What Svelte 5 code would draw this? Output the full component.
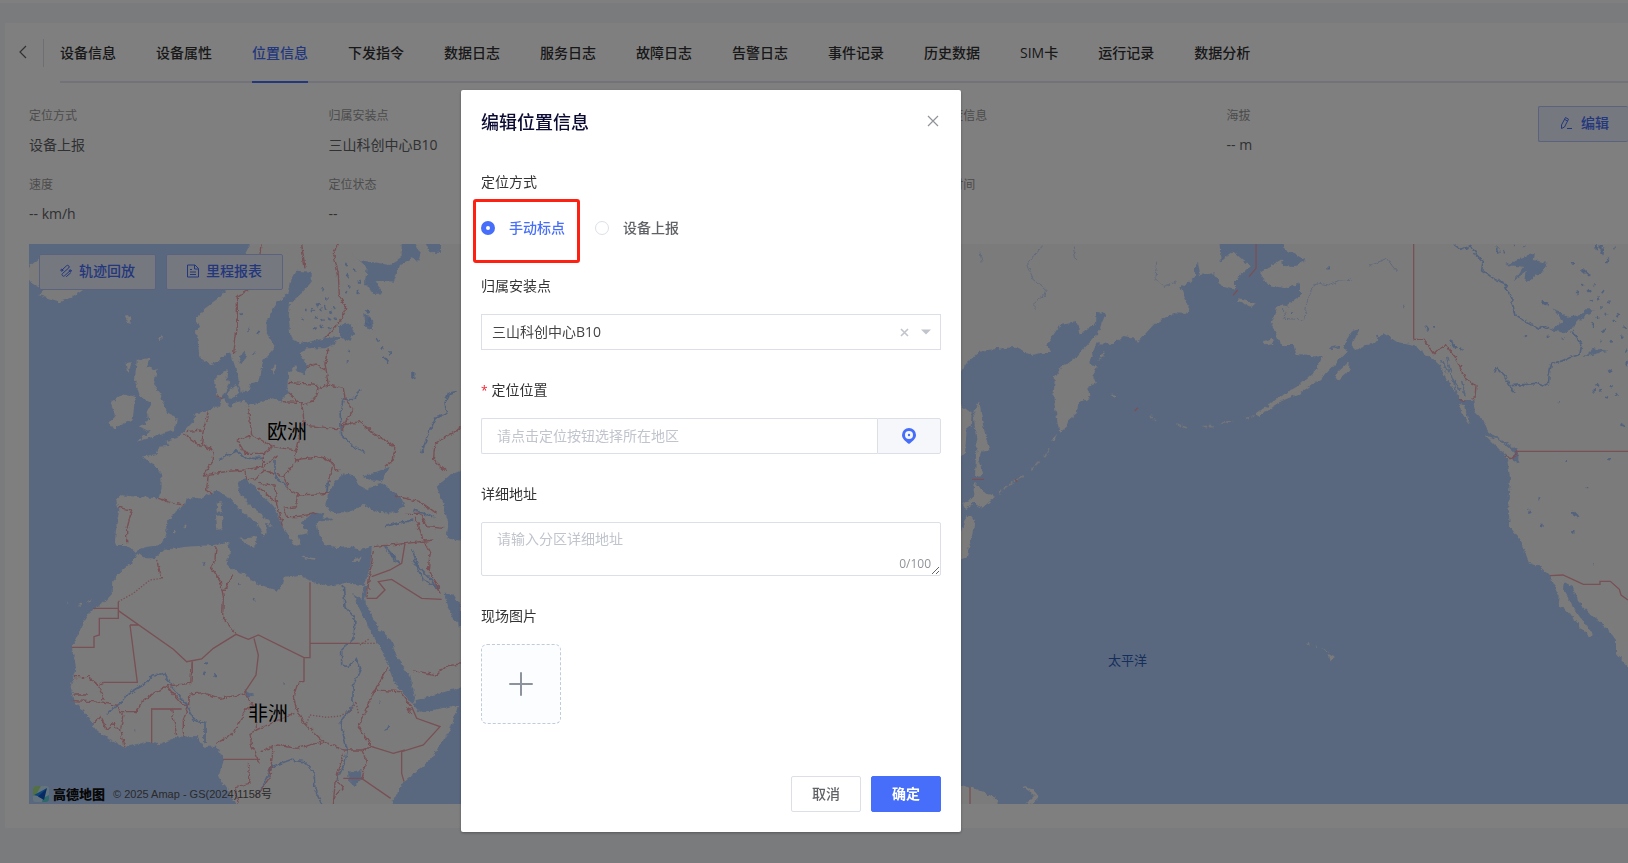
<script lang="ts">

	type Dato = {
		label: string;
		value: string;
	}

	const tabs: string[] = [
		"设备信息", "设备属性", "位置信息", "下发指令", "数据日志", "服务日志", "故障日志",
		"告警日志", "事件记录", "历史数据", "SIM卡", "运行记录", "数据分析"
	];

	const datos: Dato[] = [
		{ label: "定位方式", value: "设备上报" },
		{ label: "归属安装点", value: "三山科创中心B10" },
		{ label: "", value: "" },
		{ label: "经纬度信息", value: "" },
		{ label: "海拔", value: "-- m" },
		{ label: "速度", value: "-- km/h" },
		{ label: "定位状态", value: "--" },
		{ label: "", value: "" },
		{ label: "定位时间", value: "" },
	];

	// small lakes, drawn as short strokes
	const lagosOeste = "M1035,100l8,8M1045,130l-6,12M1060,120l8,6M1075,150l4,8M1050,165l-4,6M1035,185l6,3M1070,185l6,2M1100,240l8,12M1105,265l6,20M1095,280l14,6M970,175l-4,8M975,205h8M950,220l4,9M960,235l6,10M975,225l4,14M990,240l4,8M1000,230l6,9M935,235l5,8M945,260l9,6M965,265l4,8M985,265l8,4M1005,260l4,8M940,290l6,4M960,285l7,8M985,290l5,6M915,240h5M905,265l5,4M770,305l8,2M720,250l3,6M745,300h4M1130,325l8,12M1150,345l-6,14M1150,380l14,18M1170,370h6M1240,425v20M1045,360l7,6M1040,395h6M610,1000h6M612,1300h12M615,1325l-4,10M640,1335h8M1138,1418h5M760,1110l4,-4M850,1360h5M1165,1490l-8,12M405,1500l4,4M720,1060l-3,4";
	const lagosEste = "M650,50l6,20M672,60l3,10M700,45h5M730,48h3M875,95l5,8M908,118l22,20M950,45v16M962,42v25M970,55l-3,20M985,85l-6,14M1000,55h4M785,215l18,8M738,315v8M800,320h6M845,325h6M925,180l5,6M905,165h5M890,185l4,7M940,165l6,4M955,200l5,9M970,180l-3,10M985,215l6,4M930,210l8,4M960,235h5M975,250l6,5M950,265l8,-2M935,280l5,7M1000,270l3,6M1015,250l-4,9M1030,290l6,8M1020,320h8M970,300l6,3M990,335l8,4M960,330l3,5M1035,360l6,4M1040,395v14M985,425l12,-8M950,460l6,10M965,475l-6,8M990,470l8,3M1010,490l4,7M940,480l4,7M975,500l9,3M1025,585l8,4M880,845l14,15M780,885h8M775,805h6M750,840l-6,10M860,690v6M985,685l8,4M880,900v8M835,515l3,3M920,775h5M435,285l12,16M460,290l5,5M510,330l18,25M540,350l6,12M30,250h6M142,115h5M370,228h3M940,1000h2";

	const riosEste = "M520,42L545,60L572,47L590,75L610,95L605,120L640,145L672,160L695,210L705,258L740,275L775,297L790,288L810,297M875,300L890,325L905,345L900,372L875,380L850,392L815,400L808,430L805,460L790,468L770,460L695,467M645,430L650,415L675,440L690,467L705,492";

	let metodo = $state("manual");
	let ubicacion = $state("");
	let detalle = $state("");
	let instalacion = $state("三山科创中心B10");
	let abierto = $state(true);

</script>

<div class="pagina">
	<div class="ficha">
		<div class="cabecera">
			<button class="btn-volver" aria-label="返回">
				<svg width="8" height="14" viewBox="0 0 8 14"><path d="M7 1 1 7l6 6" fill="none" stroke="#606266" stroke-width="1.2" /></svg>
			</button>
			<nav class="pestanas">
				{#each tabs as t (t)}
					<a href="#tab" class:activa={t === "位置信息"}>{t}</a>
				{/each}
			</nav>
		</div>

		<div class="resumen">
			<div class="datos">
				{#each datos as d}
					<div class="dato">
						<div class="dato-label">{d.label}</div>
						<div class="dato-valor">{d.value}</div>
					</div>
				{/each}
			</div>
			<button class="btn-suave btn-editar" onclick={() => abierto = true}>
				<svg width="14" height="14" viewBox="0 0 14 14" fill="none" stroke="currentColor"><path d="M2.500 9 6.500 1.500l3 1.700L5.500 11l-3 1.500zM5.500 3.300l3 1.700M8 12.500h5" /></svg>
				<span>编辑</span>
			</button>
		</div>

		<div class="mapa">
			<svg class="mapa-fondo" viewBox="0 0 1599 560" preserveAspectRatio="xMinYMin slice" aria-hidden="true">
				<defs>
					<filter id="costa" x="0" y="0" width="100%" height="100%">
						<feTurbulence type="fractalNoise" baseFrequency="0.07" numOctaves="4" seed="4" />
						<feDisplacementMap in="SourceGraphic" scale="15" xChannelSelector="R" yChannelSelector="G" />
					</filter>
				</defs>

				<!-- Europa y África -->
				<g transform="translate(-29 -14) scale(.33333)">
					<g filter="url(#costa)">
						<path class="tierra" d="M757,30L735,72L700,150L662,200L640,215L610,240L590,268L600,290L588,305L595,345L598,380L630,404L660,390L688,362L697,385L712,430L722,485L745,485L752,460L778,455L790,390L826,350L800,310L800,270L830,220L860,195L875,150L890,122L935,125L935,155L905,190L870,220L866,260L872,325L900,342L975,325L1020,320L1000,345L975,355L920,355L900,370L915,395L925,410L915,435L895,425L885,405L865,430L862,470L870,490L845,505L848,515L820,505L780,515L745,527L735,510L700,520L690,535L670,505L650,500L642,450L665,430L682,420L680,445L690,460L678,480L668,500L660,530L640,530L620,545L590,550L575,580L545,612L525,625L500,632L505,648L478,650L470,672L425,680L465,705L483,730L485,770L475,805L420,802L365,796L348,810L358,840L350,880L345,935L350,945L382,945L408,966L432,952L480,945L500,910L498,885L520,850L555,825L560,805L600,805L630,790L650,780L690,805L720,840L760,870L785,900L790,925L800,905L795,880L818,890L790,855L760,835L740,815L715,780L715,755L740,750L760,765L790,800L820,830L835,855L850,895L870,925L885,950L905,945L895,915L925,910L900,880L925,860L950,845L975,850L960,870L950,885L960,920L975,945L1010,955L1050,950L1080,960L1115,950L1112,1000L1100,1045L1090,1065L1030,1060L985,1068L935,1055L900,1035L850,1040L845,1070L830,1082L770,1060L730,1030L700,1020L680,1000L690,970L685,940L640,945L560,950L490,960L465,985L430,985L410,970L395,1000L360,1030L340,1050L338,1090L310,1120L275,1140L250,1180L215,1250L228,1310L212,1370L220,1410L260,1455L290,1500L330,1530L372,1552L440,1535L480,1543L530,1520L590,1518L610,1550L650,1550L672,1590L655,1640L690,1690L715,1740L1165,1740L1210,1655L1290,1590L1350,1500L1375,1425L1260,1448L1240,1425L1250,1410L1320,1390L1420,1360L1420,30Z" />
						<path class="tierra" d="M410,390L450,385L440,410L470,420L462,465L480,490L500,545L530,565L525,600L480,615L410,635L450,605L420,590L445,570L440,545L455,520L420,500L405,450ZM370,490L405,500L398,570L340,598L328,580L345,555L332,520ZM70,125L118,85L180,150L250,180L210,205L180,215L115,195L130,180L95,160ZM650,818L668,812L664,845L654,848ZM648,858L668,855L665,895L652,900ZM718,926L770,922L766,950L745,945ZM905,980L950,985L948,990L908,984ZM1055,990L1085,980L1078,995L1060,996ZM815,415L830,405L822,432ZM690,480L710,465L718,490L700,508L678,495ZM375,262L392,255L388,285ZM478,325L488,312L482,335ZM380,400L395,395L385,430ZM548,888L560,882L558,892ZM522,903h8v4h-8ZM195,1115l8,4v5ZM235,1125l8,-4v6ZM262,1118l10,-10v8Z" />
						<!-- mares interiores y lagos -->
						<path class="agua" d="M1058,1092L1085,1110L1090,1065L1104,1065L1095,1110L1100,1127L1140,1200L1170,1225L1195,1290L1232,1340L1245,1405L1240,1422L1230,1415L1180,1350L1150,1270L1115,1210L1085,1150ZM1330,1088L1355,1090L1383,1130L1383,1190L1360,1170ZM975,830L985,790L1005,755L1030,730L1060,735L1075,765L1100,778L1130,765L1150,760L1200,800L1215,830L1180,848L1130,845L1090,825L1040,850L1000,850ZM1090,740L1170,710L1140,755L1110,750ZM1400,715L1350,735L1310,770L1330,820L1345,880L1340,925L1400,935ZM1045,55L1075,90L1140,100L1170,105L1205,80L1205,30L1240,30L1262,70L1255,95L1235,85L1200,105L1182,155L1125,150L1150,190L1120,192L1095,160L1100,110L1070,85ZM1270,30H1320V68L1290,70ZM1020,285L1050,280L1062,310L1050,335L1020,320ZM1093,245L1120,275L1122,300L1095,290ZM715,395L730,365L742,378L725,400ZM755,375L770,362L765,378ZM1045,1625L1085,1620L1082,1650L1065,1668L1045,1650ZM730,1380L760,1395L745,1410ZM940,865L990,862L1000,870L950,875Z" />
						<path class="rio gordo" d={lagosOeste} />
						<path class="rio" d="M1030,1065L1035,1130L1065,1165L1062,1225L1025,1260L1025,1305L1045,1310L1068,1285L1082,1315L1060,1365L1058,1430L1020,1475L1042,1560L1035,1600L1010,1650M320,1450L360,1420L380,1395L430,1365L460,1335L495,1330L515,1370L560,1425L582,1470L615,1480L615,1540M775,1695L815,1610L870,1590L910,1595L942,1625L945,1680L965,1722M1080,475L1065,505L1030,508L1020,545L1025,615L1060,650L1095,670M1370,485L1345,490L1335,520L1340,550L1310,560L1285,610L1265,670M655,690L710,663L740,685L790,685M825,690V740L860,770M980,790L985,755M1155,890L1190,880L1240,870M1155,950L1200,1000M1235,955L1255,1010L1310,1070M1240,840L1300,860M1240,990L1270,1050L1320,1075M1165,960L1185,995" />
						<path class="limite" d="M783,42L780,70M745,180L712,200L712,290L700,375M905,42L915,115M1015,42L1000,70L1015,130L1018,200L1040,235L1020,275L975,325M985,355L975,400L985,465L1030,475L1035,505L1060,540L1030,585L1080,575L1120,610L1185,650L1180,690L1155,712M920,410L945,402L975,420M865,457L900,460L945,462L955,475L985,465M955,475L940,515L905,525L865,490M845,515L905,518L912,570L905,585L1028,598V585M905,585L885,670M745,530L755,615L712,630L735,670L790,670L820,650L755,615M820,650L890,660L885,690L960,680L1000,700L985,755M960,680L990,690L1015,725M625,545L610,600L605,640L640,665L635,700L610,735L680,725L730,720L790,710L830,680M790,670L790,710M550,612L605,650M560,605L605,600M625,735L620,780L635,790M475,805L520,820L555,825M355,832L395,840L380,900L380,940M735,725L740,750L770,745L790,720L850,740L890,690M775,760L825,765L830,820L775,770M850,740L870,780L895,795L990,790M895,795L890,830L850,835L860,860L890,860L950,850M830,820L850,890M650,498L670,502M1185,798L1260,815L1310,850M1215,850L1260,850L1280,890L1330,895M1245,860L1260,895M1390,590L1340,620L1305,640L1300,690L1340,725M648,948L645,990L632,1010L660,1050L670,1100L668,1160L708,1213M700,1030L680,1070L668,1080M470,990L480,1025L485,1045M733,1388L760,1430L740,1435L700,1510L650,1540M912,1355H895L880,1400L890,1440L910,1475L970,1535M577,1295L572,1360L500,1368L430,1410L410,1445L360,1445L350,1425L280,1415L215,1412M220,1395H265M295,1365L310,1410M222,1340H265L295,1365L310,1357M565,1430L570,1392L610,1388L660,1405L733,1392M565,1430L550,1470V1520M500,1368L545,1420L565,1430M370,1445L362,1500L375,1550M280,1480L300,1460L320,1500L340,1480L360,1500M515,1437L530,1515M770,1500L880,1450M765,1440L770,1500L750,1510L755,1550L780,1600M785,1565L830,1545L890,1555L970,1535L1030,1560L1085,1560L1115,1550L1075,1490L1125,1380L1160,1315M1125,1380L1200,1385L1235,1430M1085,1560L1100,1590L1085,1645M1030,1570L1005,1660L1000,1722M1005,1650L1030,1670L1008,1695M820,1545L810,1640L770,1700M745,1600L750,1660L705,1670L715,1722M1240,1322L1310,1335L1340,1308L1390,1300M1120,950L1220,940L1300,930M1255,890L1270,930L1290,970L1285,1020L1325,1090M1100,1105L1110,1030L1120,960M1220,1430L1235,1455" />
					</g>
					<path class="limite" d="M355,1115V1165H298V1215L282,1220V1252H215M280,1135H355M355,1142L520,1258L560,1295L605,1287L640,1255L708,1213L745,1228L775,1215L912,1283H930V1057M390,1185L412,1357H310M390,1185H415M577,1295V1330M762,1225L775,1275L768,1335L733,1388M912,1283V1355M930,1240H1075M455,1540V1437H545M670,1588H780M1235,1430L1250,1465L1320,1490L1270,1545L1205,1565V1630L1212,1655M1115,1550L1180,1570L1215,1560M1030,1645H1085L1172,1705M1115,1040L1170,1020L1205,1000L1215,940M1100,1105H1130L1155,1080L1135,1055L1175,1048L1265,1105L1325,1108" />
					<path class="limite punteada" d="M355,1115L400,1090L450,1050L485,1045M1075,1240H1130M1080,1245L1110,1225M920,1480L930,1455L980,1462L1020,1458L1055,1440L1068,1415L1075,1450" />
				</g>

				<!-- Pacífico y Norteamérica -->
				<g transform="translate(1251 -14) scale(.33333)">
					<g filter="url(#costa)">
						<path class="tierra" d="M-965,30L-182,30L-178,95L-140,65L-90,108L-135,150L-135,180L-170,170L-200,130L-240,135L-245,100L-255,100L-255,140L-285,168L-300,165L-272,240L-280,252L-320,250L-380,285L-430,340L-442,322L-470,318L-500,342L-550,340L-565,375L-572,400L-550,410L-560,440L-552,460L-575,470L-572,505L-605,520L-610,550L-635,570L-640,590L-662,608L-680,500L-675,440L-655,410L-620,390L-545,310L-535,280L-522,250L-550,245L-552,280L-600,315L-610,275L-660,285L-700,345L-690,365L-750,375L-790,350L-900,362L-940,400L-965,435Z" />
						<path class="tierra" d="M-902,515L-890,590L-872,660L-895,665L-905,690L-890,735L-915,738L-910,640L-920,550ZM-965,520L-925,550L-928,590L-940,600L-945,670L-965,690ZM-915,755L-890,785L-855,800L-892,833L-920,820L-945,840L-950,820L-922,805ZM-940,855L-915,870L-925,920L-940,980L-965,990V930ZM-545,390L-528,365L-525,378ZM-688,635L-670,612L-675,630ZM-508,487L-492,500L-498,505ZM-50,335L-25,325L-20,342L-40,346ZM-125,205L-100,210L-75,222L-85,230L-125,215Z" />
						<path class="tierra" d="M8,30L15,60L45,70L80,92L45,108L10,105L5,88L-60,128L-35,165L15,175L60,160V200L20,228L-5,225L-28,280L5,345L40,345L50,375L125,380L110,420L50,470L0,500L-70,550L-65,558L0,515L60,490L130,440L190,375L200,365L190,345L215,305L240,295L215,345L225,360L285,335L310,310L350,335L410,350L460,390L480,405L500,450L545,510L580,510L585,545L610,570L625,605L680,640L715,660L715,700L680,680L690,740L685,830L690,890L720,930L748,998L780,1010L807,1035L839,1100L835,1130L870,1150L894,1185L930,1222L940,1215L910,1175L878,1130L849,1075L852,1055L878,1070L891,1110L940,1160L982,1195L1008,1230V1270L1080,1350V30Z" />
						<path class="tierra" d="M615,615L650,628L680,645L705,670L695,685L660,660ZM537,522L555,525L560,555L572,583L545,550ZM165,435L210,392L205,425L175,450ZM146,1272L164,1283L152,1295ZM80,1240h8v4h-8ZM106,1246l8,4v5ZM124,1254l20,10l-6,2ZM-965,1663L-912,1678L-850,1705L-845,1740H-965ZM-776,1668L-740,1680L-722,1702L-745,1725L-760,1720L-735,1695Z" />
						<path class="islas" d="M-690,655L-705,680M-725,695L-745,720M-770,738L-800,755L-845,790M-390,558L-372,572M-310,582L-275,596M-235,590H-200M-180,580L-140,575M-105,565L-75,558" />
						<path class="agua" d="M675,105L765,70L760,90L800,98L790,125L735,158L740,125L700,152L730,110ZM820,235L860,260L900,255L915,238L945,238L905,265L875,295L850,308L810,300L850,275ZM910,382L940,355L985,362L935,375ZM785,212L803,218L798,225ZM875,840L895,855L885,862Z" />
						<path class="rio gordo" d={lagosEste} />
						<path class="agua-linea" d="M485,390L505,430M500,380L515,440L540,480M520,450L530,490M545,450L555,500M150,355L180,350M670,635L710,665M290,315L300,340" />
						<path class="rio" d={riosEste} />
						<path class="rio fino" d="M75,265L80,220L100,165L120,160L145,165L180,150L215,148M265,110L320,85L350,125M-710,45L-760,105L-740,150L-700,180L-705,195L-735,215V240M-620,50L-613,90M-370,95L-375,145L-350,170L-310,155M-900,65L-893,100M10,240L15,265L70,270" />
						<path class="limite" d="M401,328L432,328L462,374L480,355L498,346L525,380L555,445L588,467L585,500L575,507M540,510H555M680,680L702,684L710,664" />
					</g>
					<path class="limite" d="M401,42V328M710,664H1050M810,1037L849,1035L910,1063H960V1054H991L1018,1078L1023,1095L1044,1110M-72,42V115L-93,140M-127,180L-141,196M-436,543L-426,533M-924,748H-888M-930,1671V1722M-795,748L-788,755" />
				</g>
			</svg>

			<span class="rotulo europa">欧洲</span>
			<span class="rotulo africa">非洲</span>
			<span class="rotulo pacifico">太平洋</span>

			<div class="acciones-mapa">
				<button class="btn-suave">
					<svg width="12" height="14" viewBox="0 0 12 14" fill="none" stroke="currentColor" stroke-linecap="round"><path d="M2 6 6.500 1.800a1.500 1.500 0 0 1 2.200 2.200L2.500 9.500a1.500 1.500 0 0 0 2.200 2.200L10 6.800" /><circle cx="1.800" cy="6.200" r="1" /><circle cx="10.200" cy="6.800" r="1" /><path d="M6.500 12.500 10.500 9" /></svg>
					<span>轨迹回放</span>
				</button>
				<button class="btn-suave">
					<svg width="12" height="14" viewBox="0 0 12 14" fill="none" stroke="currentColor"><path d="M.5 1h7.500l3.500 3.500V13H.5zM7.500 1v4h4M3 5.500h2M3 8h6M3 10.500h6" /></svg>
					<span>里程报表</span>
				</button>
			</div>

			<div class="credito">
				<svg width="18" height="18" viewBox="0 0 18 18">
					<rect x="1" y="1" width="16" height="16" rx="3" fill="#c9e8ff" />
					<path d="M1 4a3 3 0 0 1 3-3h5L4 10l-3 1z" fill="#a6e08a" />
					<path d="M10 17l1-4 6-3v4a3 3 0 0 1-3 3z" fill="#5fd0d6" />
					<path d="M15 3 2 10l5 1.500z" fill="#1c8cf5" />
					<path d="M15 3 6 11.500l6 3.500z" fill="#0a55c8" />
				</svg>
				<span class="marca">高德地图</span>
				<span class="copia">© 2025 Amap - GS(2024)1158号</span>
			</div>
		</div>
	</div>
</div>

{#if abierto}
	<div class="velo">
		<div class="modal" role="dialog" aria-modal="true" aria-labelledby="titulo">
			<div class="modal-cabecera">
				<h2 id="titulo">编辑位置信息</h2>
				<button class="btn-cerrar" aria-label="关闭" onclick={() => abierto = false}>
					<svg width="12" height="12" viewBox="0 0 12 12"><path d="M1 1l10 10M11 1 1 11" stroke="#909399" stroke-width="1.2" /></svg>
				</button>
			</div>

			<div class="campo">
				<span class="titulo-campo" id="metodo">定位方式</span>
				<div class="opciones" role="radiogroup" aria-labelledby="metodo">
					<label class="opcion destacada" class:elegida={metodo === "manual"}>
						<input type="radio" value="manual" bind:group={metodo} />
						<span>手动标点</span>
					</label>
					<label class="opcion" class:elegida={metodo === "auto"}>
						<input type="radio" value="auto" bind:group={metodo} />
						<span>设备上报</span>
					</label>
				</div>
			</div>

			<div class="campo">
				<label class="titulo-campo" for="instalacion">归属安装点</label>
				<div class="selector">
					<select id="instalacion" bind:value={instalacion}>
						<option>三山科创中心B10</option>
					</select>
					<div class="selector-iconos">
						<svg width="9" height="9" viewBox="0 0 9 9"><path d="M1 1l7 7M8 1 1 8" stroke="#c0c4cc" stroke-width="1.600" /></svg>
						<svg width="10" height="6" viewBox="0 0 10 6"><path d="M0 .5h10L5 5.500z" fill="#c0c4cc" /></svg>
					</div>
				</div>
			</div>

			<div class="campo">
				<label class="titulo-campo obligatorio" for="ubicacion">定位位置</label>
				<div class="grupo">
					<input id="ubicacion" type="text" placeholder="请点击定位按钮选择所在地区" bind:value={ubicacion} />
					<button class="btn-pin" aria-label="定位">
						<svg width="14" height="16" viewBox="0 0 14 16"><path fill="#466efa" fill-rule="evenodd" d="M7 0a7 7 0 0 1 7 7c0 3.500-3 6-7 9C3 13 0 10.500 0 7a7 7 0 0 1 7-7zm0 3a4 4 0 1 0 0 8 4 4 0 0 0 0-8z" /><circle cx="7" cy="7" r="1.200" fill="#466efa" /></svg>
					</button>
				</div>
			</div>

			<div class="campo">
				<label class="titulo-campo" for="detalle">详细地址</label>
				<div class="area">
					<textarea id="detalle" maxlength="100" placeholder="请输入分区详细地址" bind:value={detalle}></textarea>
					<span class="contador">{detalle.length}/100</span>
				</div>
			</div>

			<div class="campo">
				<label class="titulo-campo" for="foto">现场图片</label>
				<button id="foto" class="btn-foto" aria-label="现场图片">
					<svg width="24" height="24" viewBox="0 0 24 24"><path d="M12 1v22M1 12h22" stroke="#8c939d" stroke-width="2" stroke-linecap="round" /></svg>
				</button>
			</div>

			<div class="modal-pie">
				<button class="btn-pie" onclick={() => abierto = false}>取消</button>
				<button class="btn-pie btn-primario">确定</button>
			</div>
		</div>
	</div>
{/if}

<style>
	:global(body) {
		background: #f4f6f9;
		overflow: hidden;
		font-family: "Open Sans", "Noto Sans CJK SC", sans-serif;
		font-size: 14px;
		color: #606266;
	}

	button, input, select, textarea {
		font: inherit;
		color: inherit;
		box-sizing: border-box;
	}
	button {
		cursor: pointer;
	}

	.pagina {
		border-top: 3px solid #ffffff;
		padding: 20px 0 35px 5px;
	}
	.ficha {
		background: #ffffff;
		padding: 0 0 24px 24px;
	}

	/* Pestañas */
	.cabecera {
		display: flex;
		height: 60px;
		margin-left: -24px;
	}
	.btn-volver {
		width: 39px;
		height: 28px;
		margin: 16px 16px 0 0;
		padding: 0 0 2px 14px;
		border: none;
		border-right: 1px solid #dcdfe6;
		background: none;
		display: flex;
		align-items: center;
	}
	.pestanas {
		flex: 1;
		display: flex;
		gap: 40px;
		border-bottom: 2px solid #e4e7f4;
	}
	.pestanas a {
		height: 60px;
		line-height: 60px;
		box-sizing: border-box;
		color: #303133;
		font-weight: 500;
		text-decoration: none;
		white-space: nowrap;
	}
	.pestanas a.activa {
		color: #466efa;
		border-bottom: 2px solid #466efa;
	}

	/* Datos de posición */
	.resumen {
		display: flex;
		align-items: flex-start;
		gap: 12px;
		padding-top: 23px;
	}
	.datos {
		flex: 1;
		display: grid;
		grid-template-columns: repeat(5, 1fr);
	}
	.dato {
		height: 69px;
	}
	.dato-label {
		height: 20px;
		line-height: 20px;
		font-size: 12px;
		color: #999999;
	}
	.dato-valor {
		line-height: 20px;
		margin-top: 9px;
	}
	.btn-suave {
		height: 36px;
		padding: 0 20px;
		display: flex;
		align-items: center;
		gap: 7px;
		border: 1px solid #b5c5fd;
		border-radius: 2px;
		background: #edf1ff;
		color: #466efa;
		font-weight: 500;
		line-height: 20px;
		white-space: nowrap;
	}
	.btn-suave, .btn-pie {
		padding-bottom: 2px;
	}
	.btn-editar {
		width: 90px;
		padding-right: 0;
		gap: 8px;
		border-right: none;
	}

	/* Mapa */
	.mapa {
		position: relative;
		height: 560px;
		background: #b4d0ff;
		overflow: hidden;
	}
	.mapa-fondo {
		position: absolute;
		inset: 0;
		width: 100%;
		height: 100%;
	}
	.tierra {
		fill: #f6f6f6;
	}
	.agua {
		fill: #b4d0ff;
	}
	.agua-linea {
		fill: none;
		stroke: #b4d0ff;
		stroke-width: 5;
	}
	.rio {
		fill: none;
		stroke: #a8c6fa;
		stroke-width: 5;
	}
	.gordo {
		stroke-width: 7;
	}
	.fino {
		stroke-width: 2;
	}
	.islas {
		fill: none;
		stroke: #e8ebf2;
		stroke-width: 5;
		stroke-dasharray: 14 5;
	}
	.limite {
		fill: none;
		stroke: #f0a0aa;
		stroke-width: 4;
	}
	.punteada {
		stroke-dasharray: 4 5;
	}
	.acciones-mapa {
		position: relative;
		display: flex;
		gap: 10px;
		padding: 10px;
	}
	.rotulo {
		position: absolute;
		font-size: 20px;
		line-height: 24px;
		color: #000000;
		text-shadow: 0 0 2px #ffffff;
	}
	.europa {
		left: 238px;
		top: 176px;
	}
	.africa {
		left: 219px;
		top: 458px;
	}
	.pacifico {
		left: 1079px;
		top: 404px;
		font-size: 13px;
		color: #2c5cb8;
		text-shadow: none;
	}
	.credito {
		position: absolute;
		left: 3px;
		bottom: 0;
		height: 20px;
		display: flex;
		align-items: center;
		line-height: 20px;
		color: #555555;
	}
	.marca {
		margin: 0 8px 0 3px;
		font-size: 13px;
		font-weight: 900;
		color: #111111;
	}
	.copia {
		font-family: "Liberation Sans", "Noto Sans CJK SC", sans-serif;
		font-size: 11px;
	}

	/* Ventana modal */
	.velo {
		position: fixed;
		inset: 0;
		display: flex;
		justify-content: center;
		align-items: flex-start;
		padding: 90px 206px 0 0;
		background: rgba(0, 0, 0, 0.5);
		overflow: auto;
	}
	.modal {
		width: 500px;
		padding: 20px;
		box-sizing: border-box;
		background: #ffffff;
		border-radius: 2px;
		box-shadow: 0 1px 3px rgba(0, 0, 0, 0.3);
	}
	.modal-cabecera {
		display: flex;
		justify-content: space-between;
		margin-bottom: 30px;
	}
	h2 {
		margin: 0;
		font-size: 18px;
		font-weight: 500;
		line-height: 24px;
		color: #0a0a32;
	}
	.btn-cerrar {
		height: 22px;
		padding: 0 2px;
		border: none;
		background: none;
		display: flex;
		align-items: center;
	}
	.campo {
		margin-bottom: 22px;
	}
	.titulo-campo {
		display: block;
		height: 36px;
		line-height: 36px;
		margin-bottom: 10px;
		color: #333333;
	}
	.obligatorio::before {
		content: "*";
		margin-right: 4px;
		font-size: 12px;
		color: #f5222d;
	}
	.opciones {
		display: flex;
		gap: 30px;
		height: 36px;
	}
	.opcion {
		position: relative;
		display: flex;
		align-items: center;
		gap: 14px;
		font-weight: 500;
		line-height: 20px;
	}
	.opcion.elegida {
		color: #466efa;
	}
	.opcion input {
		appearance: none;
		width: 14px;
		height: 14px;
		margin: 0;
		border: 1px solid #dcdfe6;
		border-radius: 50%;
		background: #ffffff;
	}
	.opcion input:checked {
		border: 5px solid #466efa;
	}
	/* marco rojo alrededor de la primera opción */
	.destacada::after {
		content: "";
		position: absolute;
		inset: -11px -15px -17px -8px;
		border: 3px solid #ff2012;
		border-radius: 3px;
		pointer-events: none;
	}
	.selector, .area {
		position: relative;
	}
	select {
		appearance: none;
		display: block;
		width: 100%;
		height: 36px;
		padding: 0 60px 2px 10px;
		border: 1px solid #dcdfe6;
		border-radius: 0;
		background: #ffffff;
		color: #444444;
	}
	.selector-iconos {
		position: absolute;
		right: 10px;
		top: 0;
		height: 36px;
		display: flex;
		align-items: center;
		gap: 12px;
		pointer-events: none;
	}
	.grupo {
		display: flex;
	}
	.grupo input {
		flex: 1;
		height: 36px;
		padding: 0 15px 2px;
		border: 1px solid #dcdfe6;
		border-right: none;
		border-radius: 2px 0 0 2px;
	}
	.btn-pin {
		width: 64px;
		height: 36px;
		padding-bottom: 2px;
		border: 1px solid #dcdfe6;
		border-radius: 0 2px 2px 0;
		background: #f5f7fa;
		display: flex;
		align-items: center;
		justify-content: center;
	}
	textarea {
		display: block;
		width: 100%;
		height: 54px;
		padding: 5px 15px;
		line-height: 21px;
		border: 1px solid #dcdfe6;
		border-radius: 2px;
		resize: vertical;
	}
	input::placeholder, textarea::placeholder {
		color: #c0c4cc;
		opacity: 1;
	}
	.contador {
		position: absolute;
		right: 10px;
		bottom: 4px;
		font-size: 12px;
		line-height: 16px;
		color: #909399;
	}
	.btn-foto {
		width: 80px;
		height: 80px;
		border: 1px dashed #c0ccda;
		border-radius: 6px;
		background: #fbfdff;
		display: flex;
		align-items: center;
		justify-content: center;
	}
	.modal-pie {
		display: flex;
		justify-content: flex-end;
		gap: 10px;
		margin-top: 52px;
	}
	.btn-pie {
		width: 70px;
		height: 36px;
		padding: 0 0 2px;
		border: 1px solid #dcdfe6;
		border-radius: 2px;
		background: #ffffff;
		font-weight: 500;
	}
	.btn-primario {
		border-color: #466efa;
		background: #466efa;
		color: #ffffff;
		font-weight: 700;
	}
</style>
